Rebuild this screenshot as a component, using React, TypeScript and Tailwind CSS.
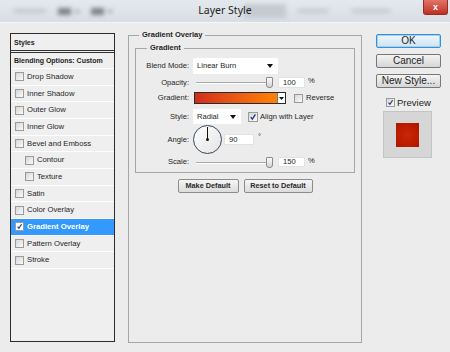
import React from "react";

function Box({ checked = false, cls = "" }: { checked?: boolean; cls?: string }) {
  return (
    <span
      className={
        "relative inline-block shrink-0 border border-[#9a9a9a] bg-gradient-to-br from-[#d6d6d6] to-[#fbfbfb] " +
        cls
      }
    >
      {checked && (
        <svg viewBox="0 0 10 10" className="absolute inset-0 h-full w-full">
          <path d="M2.2 5.2 L4.2 7.6 L8 1.8" stroke="#1f3a8a" strokeWidth="1.7" fill="none" />
        </svg>
      )}
    </span>
  );
}

function Arrow() {
  return (
    <svg width="6" height="4" viewBox="0 0 6 4" className="shrink-0">
      <path d="M0 0 H6 L3 4 Z" fill="#111" />
    </svg>
  );
}

function Slider() {
  return (
    <div className="relative ml-[7px] h-[11px] w-[72px]">
      <div className="absolute left-0 right-0 top-[5px] h-[2px] border-t border-[#a8a8a8] border-b border-b-white" />
      <div className="absolute right-[-5px] top-0 h-[11px] w-[7px] rounded-b-[3px] rounded-t-[1px] border border-[#8a8a8a] bg-gradient-to-b from-[#fafafa] to-[#d4d4d4]" />
    </div>
  );
}

function Field({ v, cls }: { v: string; cls: string }) {
  return (
    <div className={"flex items-center bg-white pl-[4px] border border-[#e2e2e2] text-[7.6px] leading-none " + cls}>
      {v}
    </div>
  );
}

const items: { t: string; indent?: boolean; on?: boolean }[] = [
  { t: "Drop Shadow" },
  { t: "Inner Shadow" },
  { t: "Outer Glow" },
  { t: "Inner Glow" },
  { t: "Bevel and Emboss" },
  { t: "Contour", indent: true },
  { t: "Texture", indent: true },
  { t: "Satin" },
  { t: "Color Overlay" },
  { t: "Gradient Overlay", on: true },
  { t: "Pattern Overlay" },
  { t: "Stroke" },
];

function Label({ t }: { t: string }) {
  return <div className="w-[53px] shrink-0 text-right text-[7.6px] leading-none text-[#1e1e1e]">{t}</div>;
}

export default function App() {
  return (
    <div
      className="flex h-[352px] w-[450px] flex-col overflow-hidden bg-[#ececec] text-[#1e1e1e]"
      style={{ fontFamily: '"Liberation Sans", Arial, sans-serif' }}
    >
      {/* title bar */}
      <div className="relative flex h-[22px] shrink-0 items-center bg-gradient-to-b from-[#e4e9ed] to-[#d8dee3]">
        <div className="flex items-center pl-[14px] gap-[12px] blur-[2px]">
          <span className="h-[4px] w-[32px] bg-[#c2c8cd]" />
          <span className="h-[7px] w-[13px] bg-[#7f8489]" />
          <span className="h-[3px] w-[4px] -ml-[8px] bg-[#9aa0a5]" />
          <span className="h-[7px] w-[13px] bg-[#7f8489]" />
          <span className="h-[3px] w-[4px] -ml-[8px] bg-[#9aa0a5]" />
          <span className="ml-[120px] h-[14px] w-[42px] bg-[#c4cbd1]" />
          <span className="h-[4px] w-[30px] bg-[#c3c9ce]" />
          <span className="ml-[12px] h-[4px] w-[38px] bg-[#c3c9ce]" />
        </div>
        <div className="absolute inset-x-0 top-[3px] text-center text-[10.5px] leading-[14px] text-[#222]" style={{ fontFamily: '"Noto Sans", "Liberation Sans", sans-serif' }}>
          Layer Style
        </div>
        <div className="absolute right-[2px] top-0 flex h-[15px] w-[25px] items-center justify-center rounded-b-[3px] border border-t-0 border-[#9b2c22] bg-gradient-to-b from-[#e07466] to-[#bf2d22] text-[9px] font-bold leading-none text-white">
          x
        </div>
      </div>

      {/* body */}
      <div className="flex flex-1 items-start border-t border-[#f6f6f6] pl-[10px]">
        {/* left styles panel */}
        <div className="mt-[10px] flex h-[309px] w-[105px] shrink-0 flex-col border border-[#2c2c2c] bg-[#efefef]">
          <div className="flex h-[19px] items-center border-b-[3px] border-double border-[#333] pl-[3px] text-[7px] font-bold leading-none">
            Styles
          </div>
          <div className="flex h-[16px] items-center border-b border-white pl-[3px] text-[7px] font-bold leading-none">
            Blending Options: Custom
          </div>
          {items.map((it) => (
            <div
              key={it.t}
              className={
                "flex h-[16.67px] items-center gap-[3px] border-b border-white text-[7.7px] leading-none " +
                (it.indent ? "pl-[14px] " : "pl-[4px] ") +
                (it.on ? "bg-[#3399ff] font-bold text-white" : "")
              }
            >
              <Box checked={it.on} cls={it.on ? "h-[9px] w-[9px] bg-white from-white to-white" : "h-[9px] w-[9px]"} />
              <span>{it.t}</span>
            </div>
          ))}
        </div>

        {/* main column */}
        <div className="ml-[13px] mt-[7px] w-[234px] shrink-0">
          <fieldset className="h-[313px] min-w-0 border border-[#a6a6a6]">
            <legend className="ml-[10px] px-[3px] text-[7.5px] font-bold leading-[10px]">Gradient Overlay</legend>
            <fieldset className="mx-[6px] mt-[3px] min-w-0 border border-[#a6a6a6] pb-[5px]">
              <legend className="ml-[11px] px-[3px] text-[7.5px] font-bold leading-[10px]">Gradient</legend>

              {/* Blend mode */}
              <div className="mt-[5px] flex h-[16px] items-center">
                <Label t="Blend Mode:" />
                <div className="ml-[4px] flex h-[16px] w-[85px] items-center justify-between bg-white pl-[4px] pr-[5px] text-[7.6px] leading-none">
                  <span>Linear Burn</span>
                  <Arrow />
                </div>
              </div>

              {/* Opacity */}
              <div className="mt-[3px] flex h-[11px] items-center">
                <Label t="Opacity:" />
                <Slider />
                <Field v="100" cls="ml-[10px] h-[11px] w-[27px]" />
                <span className="ml-[3px] self-start text-[7.6px] leading-none">%</span>
              </div>

              {/* Gradient */}
              <div className="mt-[4px] flex h-[12px] items-center">
                <Label t="Gradient:" />
                <div className="ml-[5px] flex h-[12px] w-[92px] border border-[#2a2a2a]">
                  <div className="flex-1 bg-gradient-to-r from-[#d12b1c] to-[#ff8200]" />
                  <div className="flex w-[8px] items-center justify-center border-l border-[#777] bg-white">
                    <svg width="5" height="3" viewBox="0 0 5 3">
                      <path d="M0 0 H5 L2.5 3 Z" fill="#111" />
                    </svg>
                  </div>
                </div>
                <Box cls="ml-[8px] h-[9px] w-[9px]" />
                <span className="ml-[3px] text-[7.6px] leading-none">Reverse</span>
              </div>

              {/* Style */}
              <div className="mt-[5px] flex h-[15px] items-center">
                <Label t="Style:" />
                <div className="ml-[4px] flex h-[15px] w-[48px] items-center justify-between bg-white pl-[4px] pr-[5px] text-[7.6px] leading-none">
                  <span>Radial</span>
                  <Arrow />
                </div>
                <Box checked cls="ml-[7px] h-[10px] w-[10px]" />
                <span className="ml-[2px] text-[7.6px] leading-none">Align with Layer</span>
              </div>

              {/* Angle */}
              <div className="mt-[1px] flex h-[29px] items-center">
                <Label t="Angle:" />
                <div className="relative ml-[4px] h-[29px] w-[29px] shrink-0 rounded-full border-[1.5px] border-[#3b4758] bg-gradient-to-br from-[#ffffff] to-[#e4e4e4]">
                  <div className="absolute left-[12.5px] top-[1px] h-[12.5px] w-[1px] bg-[#111]" />
                  <div className="absolute left-[11.5px] top-[11.5px] h-[3px] w-[3px] rounded-full bg-[#111]" />
                </div>
                <Field v="90" cls="ml-[2px] h-[11px] w-[30px]" />
                <span className="ml-[4px] mb-[6px] text-[7.6px] leading-none">°</span>
              </div>

              {/* Scale */}
              <div className="mt-[3px] flex h-[10px] items-center">
                <Label t="Scale:" />
                <Slider />
                <Field v="150" cls="ml-[10px] h-[10px] w-[27px]" />
                <span className="ml-[3px] self-start text-[7.6px] leading-none">%</span>
              </div>
            </fieldset>

            <div className="mt-[6px] flex justify-center gap-[5px]">
              <div className="flex h-[14px] w-[61px] items-center justify-center rounded-[2px] border border-[#8c8c8c] bg-gradient-to-b from-[#f6f6f6] to-[#dcdcdc] text-[7.3px] font-bold leading-none text-[#2a2a2a]">
                Make Default
              </div>
              <div className="flex h-[14px] w-[69px] items-center justify-center rounded-[2px] border border-[#8c8c8c] bg-gradient-to-b from-[#f6f6f6] to-[#dcdcdc] text-[7.3px] font-bold leading-none text-[#2a2a2a]">
                Reset to Default
              </div>
            </div>
          </fieldset>
        </div>

        {/* right column */}
        <div className="ml-[14px] mt-[11px] flex w-[65px] shrink-0 flex-col">
          <div className="flex h-[14px] items-center justify-center rounded-[2px] border border-[#3c8fd0] bg-gradient-to-b from-[#eef6fc] to-[#cfe3f3] text-[10px] leading-none shadow-[inset_0_0_0_1px_#9fd2f5]">
            OK
          </div>
          <div className="mt-[6px] flex h-[14px] items-center justify-center rounded-[2px] border border-[#777] bg-gradient-to-b from-[#f4f4f4] to-[#d6d6d6] text-[10px] leading-none">
            Cancel
          </div>
          <div className="mt-[6px] flex h-[14px] items-center justify-center rounded-[2px] border border-[#777] bg-gradient-to-b from-[#f4f4f4] to-[#d6d6d6] text-[10px] leading-none">
            New Style...
          </div>
          <div className="mt-[10px] ml-[10px] flex h-[9px] items-center gap-[2px]">
            <Box checked cls="h-[9px] w-[9px]" />
            <span className="text-[9.5px] leading-none">Preview</span>
          </div>
          <div className="ml-[7px] mt-[4px] flex h-[47px] w-[49px] items-center justify-center border border-[#c4c4c4] bg-[#d6d6d6]">
            <div className="h-[24px] w-[23px] bg-[radial-gradient(circle,#cc2606_0%,#b81a00_70%,#a81400_100%)]" />
          </div>
        </div>
      </div>
    </div>
  );
}
